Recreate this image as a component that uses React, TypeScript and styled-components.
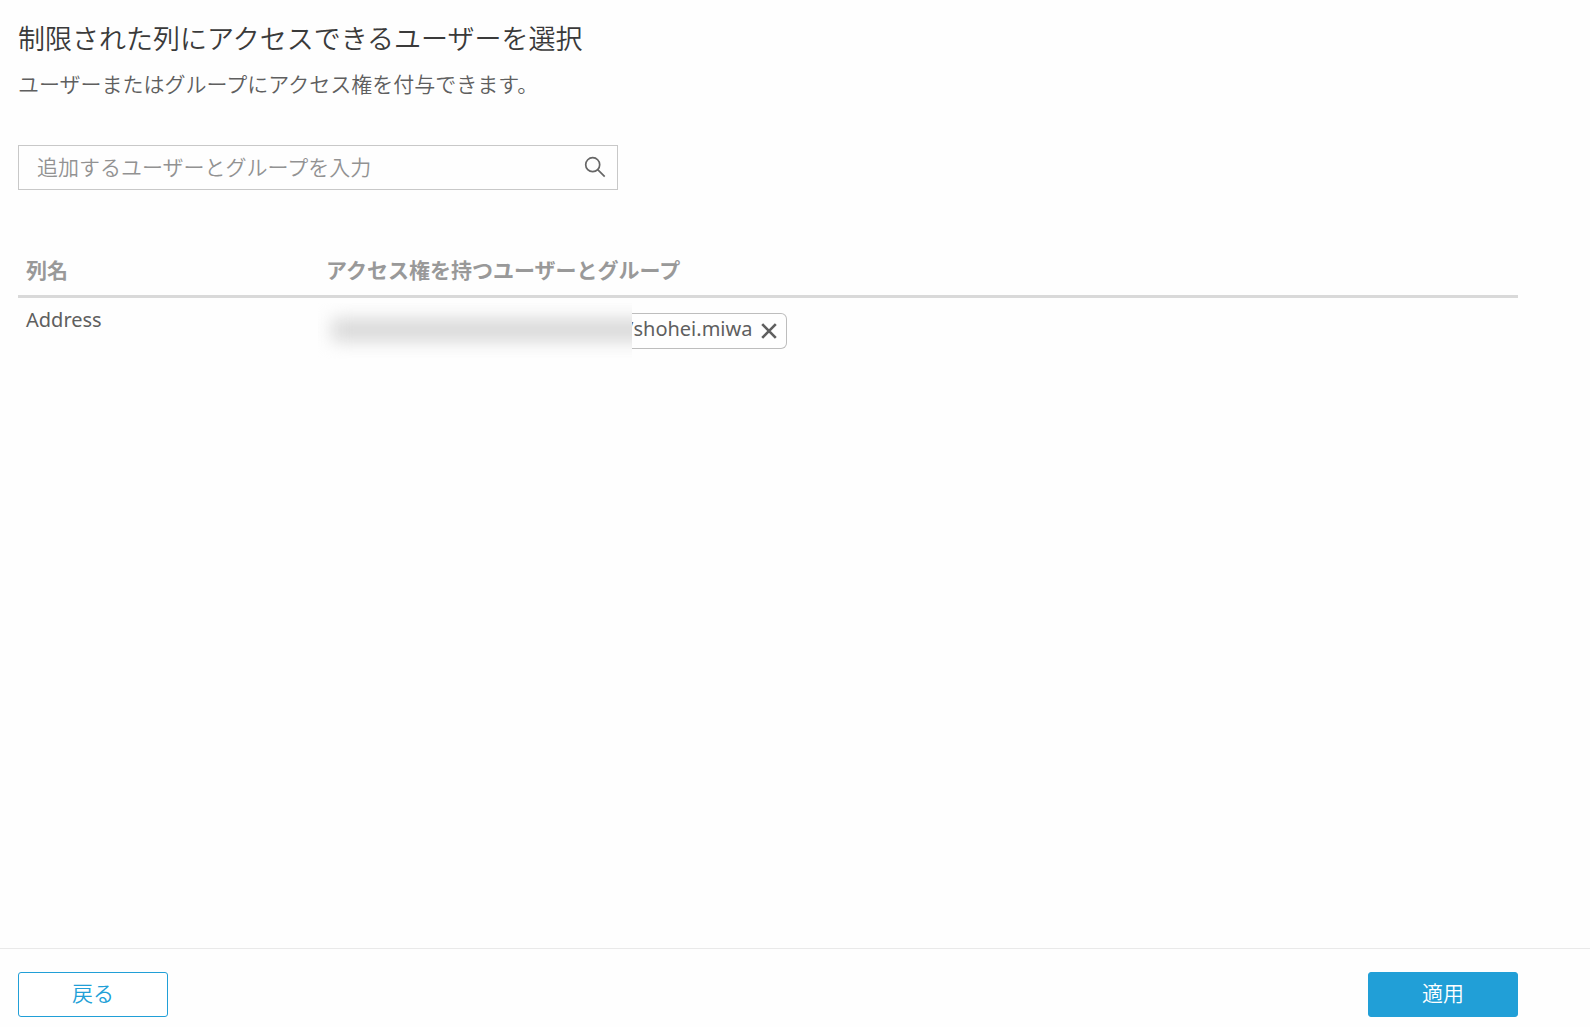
import React from "react";
import styled, { createGlobalStyle } from "styled-components";

const Global = createGlobalStyle`
  *, *::before, *::after { box-sizing: border-box; }
  body {
    margin: 0;
    background: #fefefe;
    color: #5f5f5f;
    font: 21px/32px "Noto Sans", "Noto Sans CJK JP", sans-serif;
  }
  button, input { font: inherit; }
`;

const Page = styled.div`
  min-height: 100vh;
  display: flex;
  flex-direction: column;
`;

const Content = styled.main`
  flex: 1;
  padding: 19px 72px 24px 18px;
`;

const Title = styled.h1`
  margin: 0;
  color: #3a3a3a;
  font-size: 27px;
  line-height: 40px;
  font-weight: 350;
`;

const Lead = styled.p`
  margin: 9px 0 45px;
  color: #5f5f5f;
  font-weight: 350;
`;

const Search = styled.label`
  display: flex;
  align-items: center;
  width: 600px;
  max-width: 100%;
  height: 45px;
  padding: 0 11px 2px 18px;
  border: 1px solid #c8c8c8;
`;

const SearchInput = styled.input`
  flex: 1;
  min-width: 0;
  padding: 0;
  border: 0;
  outline: 0;
  background: none;
  color: #444;
  font-weight: 350;
  &::placeholder { color: #929292; opacity: 1; }
`;

const Table = styled.table`
  width: 100%;
  margin-top: 61px;
  border-collapse: collapse;
  table-layout: fixed;
  text-align: left;
`;

const HeadCell = styled.th<{ $width?: string }>`
  width: ${(p) => p.$width ?? "auto"};
  padding: 3px 8px 9px;
  border-bottom: 3px solid #d9d9d9;
  color: #999;
  font-weight: 700;
`;

const Cell = styled.td`
  padding: 6px 8px;
  vertical-align: top;
  font-size: 20px;
`;

const Tag = styled.span`
  display: flex;
  align-items: center;
  height: 36px;
  margin-top: 9px;
`;

const Redacted = styled.span`
  position: relative;
  z-index: 1;
  width: 314px;
  height: 56px;
  margin: 0 -6px 0 -8px;
  padding: 16px 0 16px 14px;
  overflow: hidden;
  background: #fefefe;

  &::before {
    content: "";
    display: block;
    width: 320px;
    height: 22px;
    background: #d6d6d6;
    filter: blur(9px);
  }
`;

const TagName = styled.span`
  display: flex;
  align-items: center;
  height: 36px;
  padding: 0 9px 4px 0;
  border: 1px solid #bdbdbd;
  border-left: 0;
  border-radius: 0 6px 6px 0;
`;

const Remove = styled.button`
  display: flex;
  margin-left: 9px;
  padding: 4px 0 0;
  border: 0;
  background: none;
  color: #5f5f5f;
`;

const Footer = styled.footer`
  display: flex;
  justify-content: space-between;
  padding: 23px 72px 10px 18px;
  border-top: 1px solid #e9e9e9;
`;

const Action = styled.button<{ $primary?: boolean }>`
  width: 150px;
  height: 45px;
  padding: 0 0 4px;
  border: 1px solid #219fd7;
  border-radius: 3px;
  background: ${(p) => (p.$primary ? "#219fd7" : "#fff")};
  color: ${(p) => (p.$primary ? "#fff" : "#219fd7")};
  font-weight: 350;
`;

export default function App() {
  return (
    <Page>
      <Global />
      <Content>
        <Title>制限された列にアクセスできるユーザーを選択</Title>
        <Lead>ユーザーまたはグループにアクセス権を付与できます。</Lead>
        <Search>
          <SearchInput type="text" aria-label="追加するユーザーとグループを入力" placeholder="追加するユーザーとグループを入力" />
          <svg width="22" height="22" viewBox="0 0 22 22" fill="none" stroke="#666" strokeWidth="1.7" aria-hidden="true">
            <circle cx="8.7" cy="8.7" r="7" />
            <path d="M13.7 13.7l7 7" />
          </svg>
        </Search>
        <Table>
          <thead>
            <tr>
              <HeadCell $width="20%">列名</HeadCell>
              <HeadCell>アクセス権を持つユーザーとグループ</HeadCell>
            </tr>
          </thead>
          <tbody>
            <tr>
              <Cell>Address</Cell>
              <Cell>
                <Tag>
                  <Redacted />
                  <TagName>
                    /shohei.miwa
                    <Remove type="button" aria-label="削除">
                      <svg width="16" height="16" viewBox="0 0 16 16" stroke="currentColor" strokeWidth="2.6">
                        <path d="M1.2 1.2l13.6 13.6M14.8 1.2L1.2 14.8" />
                      </svg>
                    </Remove>
                  </TagName>
                </Tag>
              </Cell>
            </tr>
          </tbody>
        </Table>
      </Content>
      <Footer>
        <Action type="button">戻る</Action>
        <Action type="button" $primary>適用</Action>
      </Footer>
    </Page>
  );
}
